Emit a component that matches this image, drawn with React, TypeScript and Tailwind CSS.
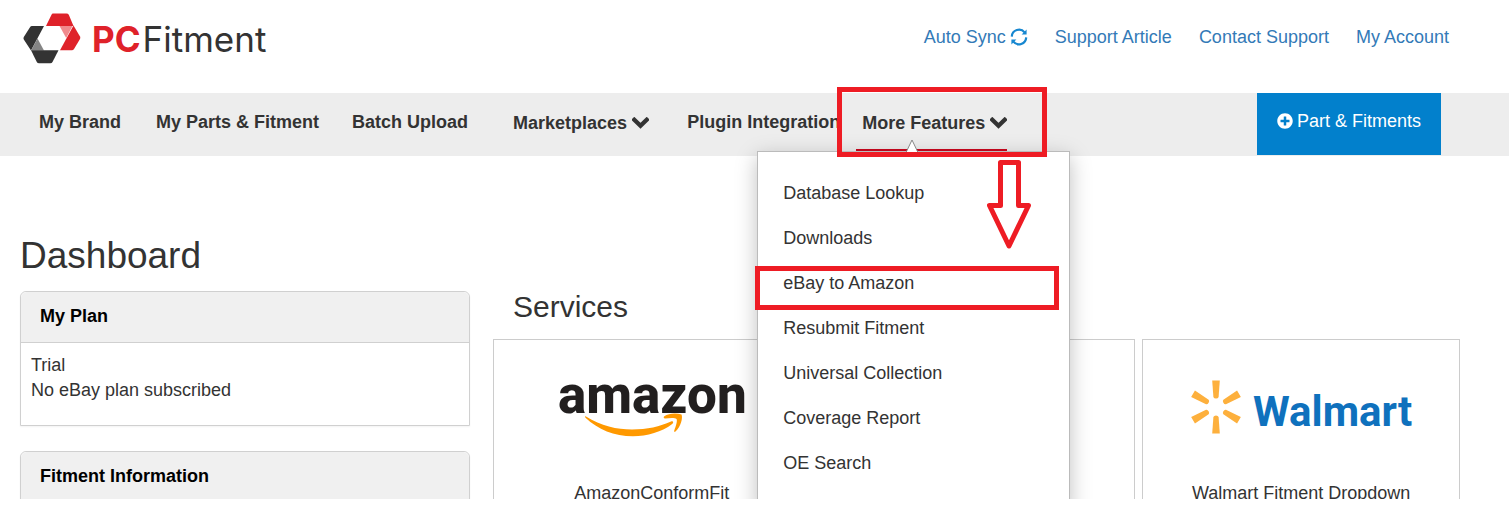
import React, { useState } from "react";
import { FaPlusCircle } from "react-icons/fa";

const topLinks = ["Support Article", "Contact Support", "My Account"];

const featureLinks = [
  "Database Lookup",
  "Downloads",
  "eBay to Amazon",
  "Resubmit Fitment",
  "Universal Collection",
  "Coverage Report",
  "OE Search",
];

const rayAngles = [0, 60, 120, 180, 240, 300];

const ChevronIcon: React.FC = () => (
  <svg width="17" height="12" viewBox="0 0 17 12" fill="none" aria-hidden="true">
    <path d="M2.300 2.800 8.500 8.800 14.700 2.800" stroke="currentColor" strokeWidth="4.300" strokeLinecap="square" />
  </svg>
);

const SyncIcon: React.FC = () => (
  <svg width="18" height="18" viewBox="0 0 18 18" fill="none" aria-hidden="true">
    <path d="M1.800 8.600A7.200 7.200 0 0 1 14.600 4.400M16.200 9.400A7.200 7.200 0 0 1 3.400 13.600" stroke="#1787d0" strokeWidth="2.200" />
    <path d="M16.600 1.600v5H11.600zM1.400 16.400v-5H6.400z" fill="#1787d0" />
  </svg>
);

const BrandLogo: React.FC = () => (
  <a href="#" className="flex items-center gap-[11px]" aria-label="PCFitment">
    <svg width="58" height="51" viewBox="0 0 58 51" aria-hidden="true">
      <path d="M30 .5h13.500q1.500 0 2.300 1.300l4.700 11.200H23l5.500-11.200Q29 .5 30 .5z" fill="#df222a" />
      <path d="M50.500 12.500 57 23.500q.7 1.300 0 2.600L51 36q-.8 1.300-2.200 1.300H37z" fill="#df222a" />
      <path d="M36.500 13h13L43.200 25z" fill="#f08a8d" />
      <path d="M21 13H9Q7.700 13 7 14.200L.8 24q-.7 1.300 0 2.600L8 37.500z" fill="#333" />
      <path d="M8 37.500 14.500 25.500l6.500 12z" fill="#858585" />
      <path d="M8 37.300h27.500L29.500 49q-.7 1.300-2.200 1.300H16q-1.500 0-2.200-1.300z" fill="#333" />
    </svg>
    <span className="flex items-center gap-[2px] font-['Inter',sans-serif] text-[35px] leading-10 text-[#333]">
      <span className="font-bold text-[#df222a]">PC</span>
      <span>Fitment</span>
    </span>
  </a>
);

const AmazonLogo: React.FC = () => (
  <svg className="overflow-visible" width="190" height="60" viewBox="0 0 190 60" role="img" aria-label="amazon">
    <text x="1" y="33" fontSize="53" fontWeight="800" fill="#221f1f" fontFamily="Roboto, sans-serif">
      amazon
    </text>
    <path d="M29 36.500C44 46 60 49.500 75 49.500c15 0 28-3 39-8 2-1 3 .7 1.500 2.200C105 52 90 56.200 76 56.200c-19 0-35-6.700-47.500-18.500-1-1 0-1.700.5-1.200z" fill="#f90" />
    <path d="M107 36.500c5-3.300 12-3.500 17.500-2 1.500 3-.5 12-6 17-1 .7-1.700.3-1.300-.8 1.500-4 3.500-10 2.300-11.700-1.500-1.500-7-1-11.500-.5-1 .1-1.800-1.200-1-2z" fill="#f90" />
  </svg>
);

const WalmartLogo: React.FC = () => (
  <svg className="overflow-visible" width="220" height="56" viewBox="0 0 220 56" role="img" aria-label="Walmart">
    <g fill="#fdb03d" transform="translate(25 27)">
      {rayAngles.map((angle) => (
        <path key={angle} d="M-3.800-26.500h7.600L2.600-10q-.5 1.500-2.600 1.500T-2.600-10z" transform={`rotate(${angle})`} />
      ))}
    </g>
    <text x="62" y="46" fontSize="42" fontWeight="700" fill="#0f71bd" fontFamily="Roboto, sans-serif">
      Walmart
    </text>
  </svg>
);

interface ServiceCardProps {
  label?: string;
  children?: React.ReactNode;
}

const ServiceCard: React.FC<ServiceCardProps> = ({ label, children }) => (
  <div className="flex h-56 flex-col items-center border border-[#ccc] pt-10">
    <div className="flex h-[100px] items-start">{children}</div>
    {label && <p className="leading-[26px]">{label}</p>}
  </div>
);

interface PanelProps {
  title: string;
  children?: React.ReactNode;
}

const Panel: React.FC<PanelProps> = ({ title, children }) => (
  <section className="mb-[25px] rounded-t-md border border-[#d0d0d0] shadow-xs">
    <h2 className="rounded-t-md border-b border-[#d0d0d0] bg-[#f0f0f0] px-[19px] pt-3 pb-[14px] leading-6 font-bold text-black">{title}</h2>
    <div className="min-h-[82px] px-[10px] py-[10px] leading-[25px]">{children}</div>
  </section>
);

const App: React.FC = () => {
  const [menuOpen, setMenuOpen] = useState<boolean>(true);

  return (
    <div className="h-screen bg-white pb-[23px] font-['Liberation_Sans',Arial,sans-serif] text-lg text-[#333]">
      <div className="h-full overflow-hidden">
        <header className="flex h-[93px] items-start justify-between pr-[60px] pl-[23px]">
          <div className="pt-[13px]">
            <BrandLogo />
          </div>
          <nav className="flex items-center gap-[27px] pt-6 leading-[26px] text-[#337ab7]">
            <a href="#" className="flex items-center gap-1">
              Auto Sync <SyncIcon />
            </a>
            {topLinks.map((link) => (
              <a key={link} href="#">{link}</a>
            ))}
          </nav>
        </header>

        <div className="flex h-[63px] justify-between bg-[#ededed] pr-[68px] pl-[39px]">
          <nav className="flex items-start pt-4 leading-[26px] font-bold">
            <a href="#" className="mr-[35px]">My Brand</a>
            <a href="#" className="mr-[33px]">My Parts &amp; Fitment</a>
            <a href="#" className="mr-[45px]">Batch Upload</a>
            <button type="button" className="mr-[38px] flex items-center gap-[5px] pt-px font-bold">
              Marketplaces <ChevronIcon />
            </button>
            <a href="#" className="mr-4">Plugin Integration</a>

            <div className="relative">
              <button
                type="button"
                aria-expanded={menuOpen}
                onClick={() => setMenuOpen(!menuOpen)}
                className="flex h-[43px] items-start gap-[5px] border-b-3 border-[#cc071e] pt-px pl-[6px] font-bold"
              >
                More Features
                <span className="flex h-[26px] items-center"><ChevronIcon /></span>
              </button>

              {menuOpen && (
                <div className="absolute top-[42px] -left-[99px] z-10 w-[313px] border border-[#bbb] bg-white pt-[19px] pb-6 font-normal shadow-[0_6px_20px_rgba(0,0,0,0.25)]">
                  <svg className="absolute -top-[13px] left-[147px]" width="14" height="14" viewBox="0 0 14 14" aria-hidden="true">
                    <path d="M1 13.500 7 1l6 12.500" fill="#fff" stroke="#888" />
                  </svg>
                  <ul>
                    {featureLinks.map((link) => (
                      <li key={link} className="relative">
                        <a href="#" className="block px-[25px] py-[10px] leading-[25px]">{link}</a>
                        {link === "eBay to Amazon" && (
                          <span className="pointer-events-none absolute top-[5px] -left-[3px] h-11 w-[304px] border-5 border-[#ee1c24]" />
                        )}
                      </li>
                    ))}
                  </ul>
                </div>
              )}

              {/* callout around the menu trigger */}
              <div className="pointer-events-none absolute -top-[22px] -left-[19px] z-20 h-[70px] w-[210px] border-5 border-[#ee1c24]" />
              <svg className="pointer-events-none absolute top-[51px] left-[131px] z-20" width="44" height="91" viewBox="0 0 44 91" fill="none" aria-hidden="true">
                <path d="M13.500 2.500h18v43H41.500L22 86 2.500 45.500h11z" stroke="#ee1c24" strokeWidth="5" strokeLinejoin="round" />
              </svg>
            </div>
          </nav>

          <a href="#" className="flex h-[62px] items-start gap-1 bg-[#0280cc] px-5 pt-[15px] leading-[26px] text-white">
            <span className="pt-[5px]"><FaPlusCircle size={16} /></span>
            Part &amp; Fitments
          </a>
        </div>

        <main className="flex gap-[23px] pr-[49px] pl-5">
          <div className="w-[450px] shrink-0 pt-20">
            <h1 className="mb-[15px] text-[37px] leading-10">Dashboard</h1>
            <Panel title="My Plan">
              <p>Trial</p>
              <p>No eBay plan subscribed</p>
            </Panel>
            <Panel title="Fitment Information" />
          </div>

          <div className="flex-1 pt-[134px]">
            <h2 className="mb-4 pl-5 text-[30px] leading-[33px]">Services</h2>
            <div className="grid grid-cols-3 gap-[7px]">
              <ServiceCard label="AmazonConformFit">
                <AmazonLogo />
              </ServiceCard>
              <ServiceCard />
              <ServiceCard label="Walmart Fitment Dropdown">
                <WalmartLogo />
              </ServiceCard>
            </div>
          </div>
        </main>
      </div>
    </div>
  );
};

export default App;
